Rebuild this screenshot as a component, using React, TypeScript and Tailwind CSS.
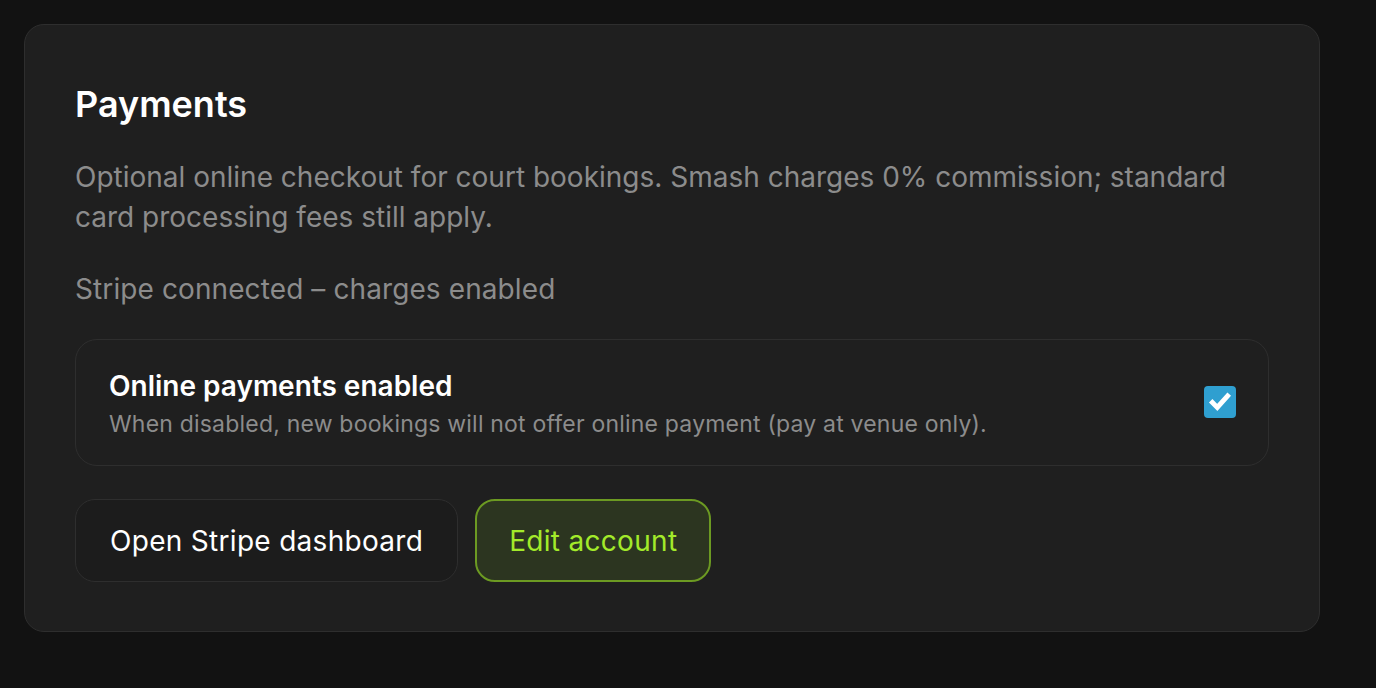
import React, { useState } from 'react';

export default function App() {
  const [enabled, setEnabled] = useState(true);

  return (
    <div className="min-h-screen bg-[#121212] p-6" style={{ fontFamily: 'Inter, "Noto Sans", sans-serif' }}>
      <div className="w-[1296px] rounded-[20px] border border-[#2e2e2e] bg-[#1f1f1f] px-[50px] pt-[59px] pb-[49px]">
        {/* Заголовок */}
        <h2 className="text-[36px] leading-[40px] font-semibold text-white">Payments</h2>

        <p className="mt-[33px] text-[28px] leading-[40px] text-[#8c8c8c]">
          Optional online checkout for court bookings. Smash charges 0% commission; standard card processing fees still apply.
        </p>

        <p className="mt-[32px] text-[28px] leading-[40px] text-[#8c8c8c] tracking-[0.1px]">
          Stripe connected – charges enabled
        </p>

        {/* Переключатель */}
        <div className="mt-[30px] flex items-center justify-between rounded-[22px] border border-[#2e2e2e] pl-[33px] pr-[32px] pt-[2px] h-[127px]">
          <div className="flex flex-col">
            <span className="text-[28px] leading-[36px] font-semibold text-white">Online payments enabled</span>
            <span className="mt-[4px] text-[23px] leading-[32px] text-[#8c8c8c] tracking-[0.2px]">
              When disabled, new bookings will not offer online payment (pay at venue only).
            </span>
          </div>
          <button
            onClick={() => setEnabled(!enabled)}
            className={`-mt-[4px] flex h-[32px] w-[32px] items-center justify-center rounded-[4px] ${enabled ? 'bg-[#2f9fd0]' : 'bg-[#3a3a3a]'}`}
          >
            {enabled && (
              <svg viewBox="0 0 24 24" className="h-[26px] w-[26px]" fill="none" stroke="white" strokeWidth="4.5" strokeLinecap="square">
                <path d="M5 12.5l4.5 4.5L19 6.5" />
              </svg>
            )}
          </button>
        </div>

        {/* Кнопки */}
        <div className="mt-[33px] flex gap-[17px]">
          <button className="h-[83px] rounded-[20px] border border-[#2e2e2e] bg-[#1c1c1c] px-[34px] text-[28px] text-white tracking-[0.3px]">
            Open Stripe dashboard
          </button>
          <button className="h-[83px] rounded-[20px] border-2 border-[#6c9a22] bg-[#2c3520] px-[32px] text-[28px] text-[#a3ea2a] tracking-[0.3px]">
            Edit account
          </button>
        </div>
      </div>
    </div>
  );
}
